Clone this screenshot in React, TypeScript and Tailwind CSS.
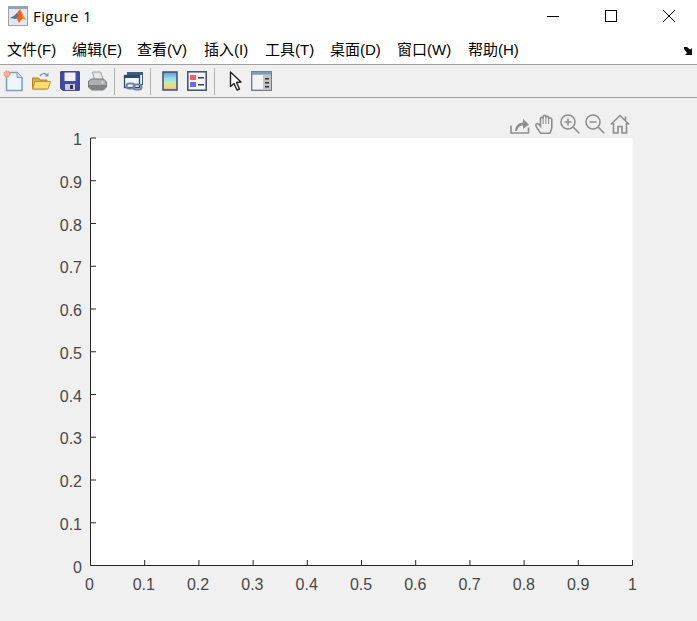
const menus = ['文件(F)', '编辑(E)', '查看(V)', '插入(I)', '工具(T)', '桌面(D)', '窗口(W)', '帮助(H)'];
const menuGaps = ['w-[65px]', 'w-[65px]', 'w-[67px]', 'w-[61px]', 'w-[65px]', 'w-[67px]', 'w-[71px]', 'w-[60px]'];
const xTicks = [0, 0.1, 0.2, 0.3, 0.4, 0.5, 0.6, 0.7, 0.8, 0.9, 1];

function MatlabIcon() {
  return (
    <svg width="20" height="20" viewBox="0 0 20 20">
      <rect x="0.5" y="0.5" width="19" height="19" fill="#e4e8ee" stroke="#9aa3ad" />
      <rect x="0.5" y="0.5" width="19" height="2.5" fill="#8fa3bb" />
      <path d="M2 12l4-2 3-3 3-4 2 4 4 7-3-1.5-2 1.5-2 3-2-4-3-1z" fill="#e8641e" />
      <path d="M2 12l4-2 3-3 1 3-3 3-2-.5z" fill="#3c78b5" />
      <path d="M12 3l2 4 4 7-3-1.5z" fill="#f0a030" />
    </svg>
  );
}

function NewIcon() {
  return (
    <svg width="21" height="22" viewBox="0 0 21 22">
      <path d="M3.5 2.500h10.500l5 5v13h-15.500z" fill="#eef5fc" stroke="#7f9dc2" strokeWidth="1.500" />
      <path d="M14 2.500v5h5" fill="#cfe0f2" stroke="#7f9dc2" />
      <circle cx="4" cy="4" r="3" fill="#f4b09a" stroke="#e8813f" strokeDasharray="1.500 1" />
    </svg>
  );
}

function OpenIcon() {
  return (
    <svg width="20" height="20" viewBox="0 0 20 20">
      <path d="M1.500 18V7h6l1.500 2h7v9z" fill="#e0ae30" stroke="#a8842c" />
      <path d="M1.500 18l2.500-7.500h15.500l-2.500 7.500z" fill="#fbdc72" stroke="#b8923a" />
      <path d="M9 5c2-3 5-3 7-1" fill="none" stroke="#7f97ad" strokeWidth="1.500" />
      <path d="M17.500 1.500v4h-4z" fill="#7f97ad" />
    </svg>
  );
}

function SaveIcon() {
  return (
    <svg width="20" height="20" viewBox="0 0 20 20">
      <path d="M.7.700h18.600v18.600H2.700l-2-2z" fill="#4349a8" stroke="#2a2f70" />
      <rect x="4.500" y="1.500" width="11" height="8.500" fill="#eef0f8" />
      <rect x="5" y="13" width="10" height="6" fill="#c9ccd8" />
      <rect x="10" y="14" width="3" height="4" fill="#30344f" />
    </svg>
  );
}

function PrintIcon() {
  return (
    <svg width="21" height="20" viewBox="0 0 21 20">
      <path d="M5.500 1h8l3 8h-9z" fill="#e6e9eb" stroke="#9a9ea2" />
      <path d="M1.500 10l3-2h12l3 3v5l-3 3h-12l-3-3z" fill="#adafb1" stroke="#76787a" />
      <path d="M2 14h17v2l-3 3H5l-3-3z" fill="#808284" />
      <circle cx="15.500" cy="11.500" r="1" fill="#e8e8e8" />
    </svg>
  );
}

function LinkIcon() {
  return (
    <svg width="21" height="21" viewBox="0 0 21 21">
      <rect x="4.500" y="1.500" width="15" height="12" fill="#e8f0f8" stroke="#405c85" />
      <rect x="4.500" y="1.500" width="15" height="2.500" fill="#405c85" />
      <rect x="1.500" y="4.500" width="15" height="12" fill="#f3f7fb" stroke="#33496c" strokeWidth="1.300" />
      <rect x="1.500" y="4.500" width="15" height="2.500" fill="#33496c" />
      <rect x="3.500" y="12.500" width="8" height="5" rx="2.500" fill="none" stroke="#6d83a3" strokeWidth="2" />
      <rect x="10.500" y="13.500" width="8" height="5" rx="2.500" fill="none" stroke="#6d83a3" strokeWidth="2" />
    </svg>
  );
}

function ColorbarIcon() {
  return (
    <svg width="16" height="20" viewBox="0 0 16 20">
      <defs>
        <linearGradient id="cb" x1="0" y1="0" x2="0" y2="1">
          <stop offset="0" stopColor="#6f8fe0" />
          <stop offset="0.35" stopColor="#8fe0e8" />
          <stop offset="0.6" stopColor="#c8eca8" />
          <stop offset="0.85" stopColor="#f6d08a" />
          <stop offset="1" stopColor="#f0a080" />
        </linearGradient>
      </defs>
      <rect x="1" y="1" width="14" height="18" fill="url(#cb)" stroke="#3c4f70" strokeWidth="1.500" />
    </svg>
  );
}

function LegendIcon() {
  return (
    <svg width="20" height="20" viewBox="0 0 20 20">
      <rect x="0.800" y="0.800" width="18.400" height="18.400" fill="#f4f6fa" stroke="#3c4f70" strokeWidth="1.500" />
      <rect x="3" y="4" width="6" height="5" fill="#e8626a" />
      <rect x="3" y="11" width="6" height="5" fill="#6a6ae8" />
      <rect x="11" y="6" width="6" height="1.500" fill="#3c4450" />
      <rect x="11" y="13" width="6" height="1.500" fill="#3c4450" />
    </svg>
  );
}

function CursorIcon() {
  return (
    <svg width="13" height="20" viewBox="0 0 13 20">
      <path d="M1.500 1v14.500l3.500-3 3 6.500 2.500-1-3-6.500 4.500-.5z" fill="#fff" stroke="#222" strokeWidth="1.400" strokeLinejoin="round" />
    </svg>
  );
}

function PanelIcon() {
  return (
    <svg width="21" height="20" viewBox="0 0 21 20">
      <rect x="0.700" y="0.700" width="19.600" height="18.600" fill="#f2f3f4" stroke="#6a7580" strokeWidth="1.300" />
      <rect x="0.700" y="0.700" width="19.600" height="3" fill="#7f9ab2" />
      <rect x="12" y="4" width="8" height="15" fill="#c2c5c8" />
      <rect x="14" y="7" width="4" height="1.500" fill="#333" />
      <rect x="14" y="11" width="4" height="1.500" fill="#333" />
      <rect x="14" y="15" width="4" height="1.500" fill="#333" />
    </svg>
  );
}

function Separator() {
  return <div className="w-px h-[27px] bg-[#b0b0b0]" />;
}

function AxesIcons() {
  const stroke = { fill: 'none', stroke: '#8e8e8e', strokeWidth: 1.600 };
  return (
    <div className="absolute left-[510px] top-[16px] flex gap-[5px]">
      <svg width="20" height="20" viewBox="0 0 20 20">
        <path d="M1 11.500v7.500h17.500v-5.500" {...stroke} />
        <path d="M5 17c.5-5 3.500-8.500 8-8.500V5l6 5.500-6 4.500v-3.500c-3 0-5 1.500-6 5.500z" fill="#8e8e8e" />
      </svg>
      <svg width="20" height="20" viewBox="0 0 20 20">
        <path d="M5.500 19.200C4.500 17 .8 13 .8 11c0-1.500 2-1.800 3-.8l1.700 2V4.500c0-1.500 2.700-1.500 2.700 0V2.500c0-1.500 2.700-1.500 2.700 0v1c0-1.500 2.700-1.500 2.700 0v1.500c0-1.500 3.200-1.300 3.200.3v8c0 2.500-1 4-2 5.900z" {...stroke} />
        <path d="M8.200 4v6M10.900 3v7M13.600 4v6" {...stroke} strokeWidth={1} />
      </svg>
      <svg width="20" height="20" viewBox="0 0 20 20">
        <circle cx="8" cy="8" r="7" {...stroke} />
        <path d="M12.800 12.800l6.500 6.500M4.500 8h7M8 4.500v7" {...stroke} />
      </svg>
      <svg width="20" height="20" viewBox="0 0 20 20">
        <circle cx="8" cy="8" r="7" {...stroke} />
        <path d="M12.800 12.800l6.500 6.500M4.500 8h7" {...stroke} />
      </svg>
      <svg width="20" height="20" viewBox="0 0 20 20">
        <path d="M.8 10.500L10 1.500l9.200 9M3.500 9v10h4.500v-6.500h4V19h4.500V9M15.500 2.500v3.500" {...stroke} />
      </svg>
    </div>
  );
}

function Chart() {
  const tx = (v: number) => 90.5 + v * 542;
  const ty = (v: number) => 565.5 - v * 427.5;
  return (
    <svg width="697" height="523" viewBox="0 98 697 523" className="block" style={{ fontFamily: '"Liberation Sans", Arial, sans-serif' }}>
      <rect x="90.500" y="138" width="542" height="427.500" fill="#fff" />
      <path d="M90.500 138V565.500H632.500" fill="none" stroke="#262626" strokeWidth="1" />
      {xTicks.map(v => (
        <g key={v}>
          <path d={`M${tx(v)} 565.500v-5.500M90.500 ${ty(v)}h5.500`} stroke="#262626" strokeWidth="1" />
          <text x={tx(v) - 1 + v} y="590" fontSize="16" fill="#484848" textAnchor="middle">{v}</text>
          <text x="82" y={ty(v) + 7} fontSize="16" fill="#484848" textAnchor="end">{v}</text>
        </g>
      ))}
    </svg>
  );
}

export default function App() {
  return (
    <div className="w-[697px] h-[621px] overflow-hidden bg-white flex flex-col font-['Liberation_Sans','Noto_Sans_CJK_SC',sans-serif]">
      {/* title bar */}
      <div className="h-9 flex items-center shrink-0 pl-2 pb-1">
        <MatlabIcon />
        <span className="ml-[5px] text-[15px] text-black font-['Open_Sans',sans-serif] tracking-[0.4px]">Figure 1</span>
        <div className="ml-auto flex items-center mr-[22px] gap-[46px]">
          <div className="w-3 h-px bg-black" />
          <div className="w-3 h-3 border border-black" />
          <svg width="12" height="12" viewBox="0 0 12 12">
            <path d="M0 0l12 12M12 0L0 12" stroke="#000" strokeWidth="1" />
          </svg>
        </div>
      </div>
      {/* menu */}
      <div className="h-[29px] flex items-center shrink-0 pl-[7px] text-[15px] text-black border-b border-[#a0a0a0]">
        {menus.map((m, i) => (
          <span key={m} className={`${menuGaps[i]} shrink-0 whitespace-nowrap`}>{m}</span>
        ))}
        <svg width="10" height="8" viewBox="0 0 10 8" className="ml-auto mr-[3px] mt-[1px]">
          <path d="M0 0h3l3 2.500L8 1v7H1l2-2L0 2z" fill="#111" />
        </svg>
      </div>
      {/* toolbar */}
      <div className="h-[33px] flex items-center shrink-0 pl-[3px] bg-[#f0f0f0] border-b border-[#a0a0a0]">
        <NewIcon />
        <div className="ml-[7px]"><OpenIcon /></div>
        <div className="ml-[9px]"><SaveIcon /></div>
        <div className="ml-[7px]"><PrintIcon /></div>
        <div className="ml-[6px]"><Separator /></div>
        <div className="ml-2"><LinkIcon /></div>
        <div className="ml-[6px]"><Separator /></div>
        <div className="ml-[11px]"><ColorbarIcon /></div>
        <div className="ml-[9px]"><LegendIcon /></div>
        <div className="ml-[7px]"><Separator /></div>
        <div className="ml-[14px]"><CursorIcon /></div>
        <div className="ml-[9px]"><PanelIcon /></div>
      </div>
      {/* plot */}
      <div className="relative flex-1 bg-[#f0f0f0]">
        <Chart />
        <AxesIcons />
      </div>
    </div>
  );
}
